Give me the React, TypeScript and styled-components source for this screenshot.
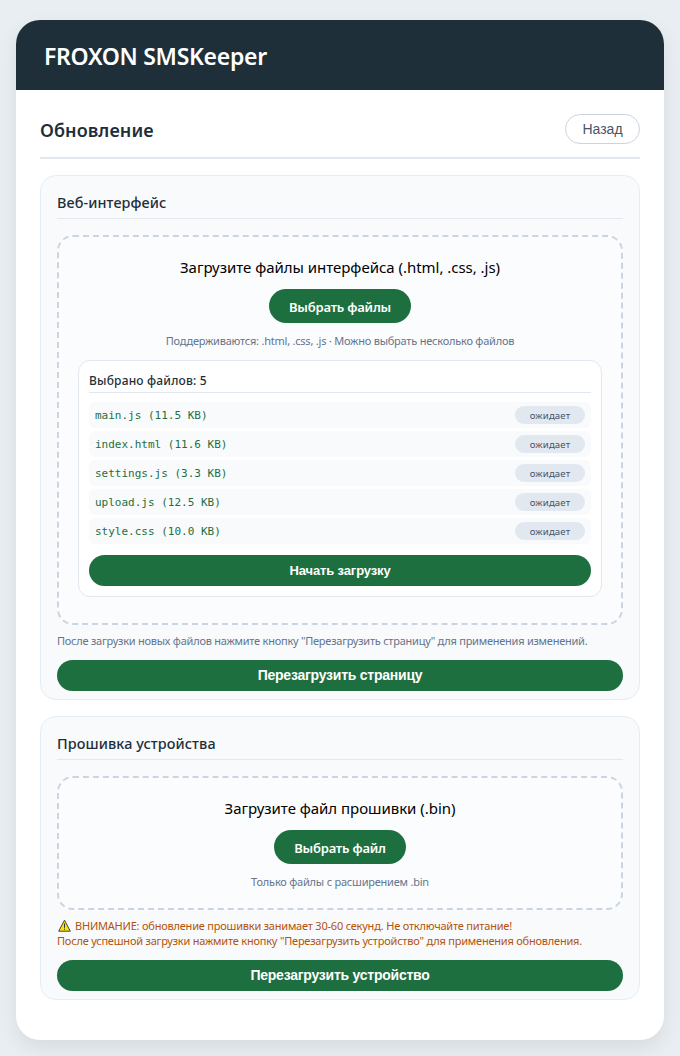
import { useState } from 'react';
import styled, { createGlobalStyle } from 'styled-components';

const UI_FONT = "'Noto Sans', 'Open Sans', sans-serif";
const BUTTON_FONT = "'Liberation Sans', Arial, sans-serif";

const GlobalStyle = createGlobalStyle`
  *, *::before, *::after {
    box-sizing: border-box;
    margin: 0;
    padding: 0;
  }

  body {
    padding: 20px 16px 16px;
    background: #e9eef2;
    font-family: ${UI_FONT};
    color: #000;
  }
`;

const Card = styled.div`
  height: 1020px;
  overflow: hidden;
  background: #fff;
  border-radius: 24px;
  box-shadow: 0 8px 20px rgba(0, 0, 0, 0.08);
`;

const Header = styled.header`
  display: flex;
  align-items: center;
  height: 70px;
  padding: 0 28px;
  background: #1e2f3a;
`;

const AppTitle = styled.h1`
  padding-top: 2px;
  font-size: 23px;
  line-height: 32px;
  font-weight: 600;
  letter-spacing: -0.3px;
  color: #fff;
`;

const Content = styled.main`
  padding: 24px;
`;

const PageHead = styled.div`
  display: flex;
  justify-content: space-between;
  align-items: flex-start;
  height: 45px;
  margin-bottom: 16px;
  border-bottom: 2px solid #e2e8f0;
`;

const PageTitle = styled.h2`
  font-size: 18px;
  line-height: 32px;
  font-weight: 600;
  letter-spacing: 0.08px;
  color: #1e2f3a;
`;

const BackButton = styled.button`
  width: 75px;
  height: 30px;
  border: 1px solid #cbd5e1;
  border-radius: 30px;
  background: transparent;
  font-family: ${BUTTON_FONT};
  font-size: 14px;
  color: #475569;
  cursor: pointer;
`;

const Section = styled.section<{ $height: number }>`
  height: ${({ $height }) => $height}px;
  margin-bottom: 16px;
  padding: 16px;
  background: #f8fafc;
  border: 1px solid #e2edf7;
  border-radius: 16px;
`;

const SectionTitle = styled.h3`
  height: 27px;
  margin-bottom: 16px;
  border-bottom: 1px solid #e2e8f0;
  font-size: 14.4px;
  line-height: 21px;
  font-weight: 500;
  letter-spacing: 0.1px;
  color: #1e2f3a;
`;

const DropZone = styled.div<{ $height: number }>`
  display: flex;
  flex-direction: column;
  align-items: center;
  height: ${({ $height }) => $height}px;
  padding: 20px 19px;
  background: #fbfcfe;
  border: 2px dashed #cbd5e1;
  border-radius: 16px;
`;

const ZoneText = styled.p`
  margin-bottom: 11px;
  font-size: 15px;
  line-height: 21px;
  letter-spacing: -0.03px;
  white-space: nowrap;
`;

const PickButton = styled.label<{ $width: number }>`
  display: flex;
  flex-shrink: 0;
  align-items: center;
  justify-content: center;
  width: ${({ $width }) => $width}px;
  height: 34px;
  padding-top: 2px;
  border-radius: 30px;
  background: #1e6f3f;
  font-size: 13px;
  font-weight: 600;
  letter-spacing: -0.2px;
  color: #fff;
  white-space: nowrap;
  cursor: pointer;
`;

const HiddenInput = styled.input`
  display: none;
`;

const ZoneHint = styled.p`
  margin-top: 10px;
  font-size: 11px;
  line-height: 16px;
  letter-spacing: -0.22px;
  color: #64748b;
  white-space: nowrap;
`;

const FileBox = styled.div`
  align-self: stretch;
  height: 237px;
  margin-top: 11px;
  padding: 10px;
  background: #fff;
  border: 1px solid #e2e8f0;
  border-radius: 12px;
`;

const FileBoxTitle = styled.div`
  height: 22px;
  margin-bottom: 9px;
  border-bottom: 1px solid #e2e8f0;
  font-size: 12px;
  line-height: 19px;
  font-weight: 500;
  letter-spacing: 0.18px;
  color: #1e2f3a;
`;

const FileList = styled.ul`
  display: flex;
  flex-direction: column;
  gap: 3px;
  margin-bottom: 11px;
  list-style: none;
`;

const FileRow = styled.li`
  display: flex;
  justify-content: space-between;
  align-items: center;
  height: 26px;
  padding: 0 6px;
  background: #f8fafc;
  border-radius: 6px;
`;

const FileName = styled.span`
  font-family: 'DejaVu Sans Mono', monospace;
  font-size: 11px;
  color: #1e6f3f;
`;

const FileStatus = styled.span`
  width: 70px;
  height: 18px;
  border-radius: 20px;
  background: #e2e8f0;
  font-size: 9.6px;
  line-height: 19px;
  letter-spacing: 0.15px;
  text-align: center;
  color: #475569;
`;

const WideButton = styled.button<{ $small?: boolean }>`
  display: block;
  width: 100%;
  height: 31px;
  padding-bottom: ${({ $small }) => ($small ? 0 : 2)}px;
  border: none;
  border-radius: 30px;
  background: #1e6f3f;
  font-family: ${BUTTON_FONT};
  font-size: ${({ $small }) => ($small ? 13 : 14)}px;
  font-weight: 600;
  letter-spacing: ${({ $small }) => ($small ? -0.13 : -0.24)}px;
  color: #fff;
  cursor: pointer;
`;

const Note = styled.p<{ $warning?: boolean }>`
  margin: ${({ $warning }) => ($warning ? '8px 0 12px' : '8px 0 11px')};
  font-size: 11px;
  line-height: ${({ $warning }) => ($warning ? 15 : 16)}px;
  letter-spacing: ${({ $warning }) => ($warning ? -0.21 : -0.24)}px;
  color: ${({ $warning }) => ($warning ? '#b45309' : '#64748b')};
  white-space: nowrap;
`;

const NoteLine = styled.span`
  display: flex;
  align-items: center;
  gap: 4px;
`;

const files = [
  { name: 'main.js', size: '11.5 KB' },
  { name: 'index.html', size: '11.6 KB' },
  { name: 'settings.js', size: '3.3 KB' },
  { name: 'upload.js', size: '12.5 KB' },
  { name: 'style.css', size: '10.0 KB' },
];

function WarningIcon() {
  return (
    <svg width="14" height="13" viewBox="0 0 14 13" aria-hidden="true">
      <path d="M7.5 1.2 13.3 12.2H1.7Z" fill="#fde300" stroke="#444" strokeWidth="1" strokeLinejoin="round" />
      <path d="M7.5 4.5V8.8M7.5 9.6V10.8" stroke="#333" strokeWidth="1" />
    </svg>
  );
}

export default function App() {
  const [queue] = useState(files);

  return (
    <>
      <GlobalStyle />
      <Card>
        <Header>
          <AppTitle>FROXON SMSKeeper</AppTitle>
        </Header>
        <Content>
          <PageHead>
            <PageTitle>Обновление</PageTitle>
            <BackButton>Назад</BackButton>
          </PageHead>

          <Section $height={525}>
            <SectionTitle>Веб-интерфейс</SectionTitle>
            <DropZone $height={390}>
              <ZoneText>Загрузите файлы интерфейса (.html, .css, .js)</ZoneText>
              <PickButton $width={142}>
                Выбрать файлы
                <HiddenInput type="file" multiple accept=".html,.css,.js" />
              </PickButton>
              <ZoneHint>Поддерживаются: .html, .css, .js · Можно выбрать несколько файлов</ZoneHint>
              <FileBox>
                <FileBoxTitle>Выбрано файлов: {queue.length}</FileBoxTitle>
                <FileList>
                  {queue.map((f) => (
                    <FileRow key={f.name}>
                      <FileName>
                        {f.name} ({f.size})
                      </FileName>
                      <FileStatus>ожидает</FileStatus>
                    </FileRow>
                  ))}
                </FileList>
                <WideButton $small>Начать загрузку</WideButton>
              </FileBox>
            </DropZone>
            <Note>После загрузки новых файлов нажмите кнопку "Перезагрузить страницу" для применения изменений.</Note>
            <WideButton>Перезагрузить страницу</WideButton>
          </Section>

          <Section $height={284}>
            <SectionTitle>Прошивка устройства</SectionTitle>
            <DropZone $height={134}>
              <ZoneText>Загрузите файл прошивки (.bin)</ZoneText>
              <PickButton $width={132}>
                Выбрать файл
                <HiddenInput type="file" accept=".bin" />
              </PickButton>
              <ZoneHint>Только файлы с расширением .bin</ZoneHint>
            </DropZone>
            <Note $warning>
              <NoteLine>
                <WarningIcon />
                ВНИМАНИЕ: обновление прошивки занимает 30-60 секунд. Не отключайте питание!
              </NoteLine>
              <NoteLine>
                После успешной загрузки нажмите кнопку "Перезагрузить устройство" для применения обновления.
              </NoteLine>
            </Note>
            <WideButton>Перезагрузить устройство</WideButton>
          </Section>
        </Content>
      </Card>
    </>
  );
}
